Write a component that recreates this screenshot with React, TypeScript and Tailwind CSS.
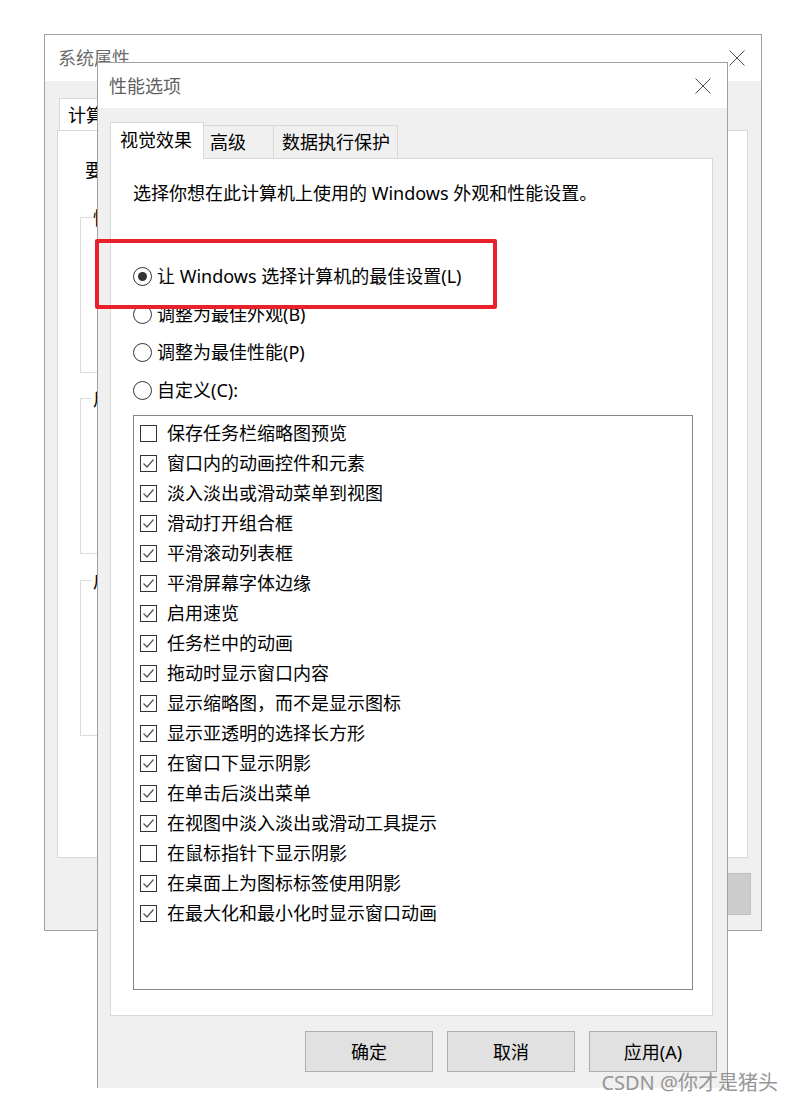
import React from 'react';

const options: [string, boolean][] = [
  ['保存任务栏缩略图预览', false],
  ['窗口内的动画控件和元素', true],
  ['淡入淡出或滑动菜单到视图', true],
  ['滑动打开组合框', true],
  ['平滑滚动列表框', true],
  ['平滑屏幕字体边缘', true],
  ['启用速览', true],
  ['任务栏中的动画', true],
  ['拖动时显示窗口内容', true],
  ['显示缩略图，而不是显示图标', true],
  ['显示亚透明的选择长方形', true],
  ['在窗口下显示阴影', true],
  ['在单击后淡出菜单', true],
  ['在视图中淡入淡出或滑动工具提示', true],
  ['在鼠标指针下显示阴影', false],
  ['在桌面上为图标标签使用阴影', true],
  ['在最大化和最小化时显示窗口动画', true],
];

const radios = ['让 Windows 选择计算机的最佳设置(L)', '调整为最佳外观(B)', '调整为最佳性能(P)', '自定义(C):'];

const CloseIcon = () => (
  <svg width="16" height="16" viewBox="0 0 16 16">
    <path d="M0.5 0.5L15.5 15.5M15.5 0.5L0.5 15.5" stroke="#4a4a4a" strokeWidth="1" fill="none" />
  </svg>
);

const Checkbox: React.FC<{ checked: boolean }> = ({ checked }) => (
  <div className="w-[17px] h-[17px] border border-[#333] bg-white flex items-center justify-center shrink-0">
    {checked && (
      <svg width="15" height="15" viewBox="0 0 15 15">
        <polyline points="2.5,7.5 6,11 12.5,3.5" stroke="#555" strokeWidth="1.3" fill="none" />
      </svg>
    )}
  </div>
);

const Radio: React.FC<{ selected: boolean }> = ({ selected }) => (
  <div className="w-[19px] h-[19px] rounded-full border border-[#333] bg-white flex items-center justify-center shrink-0">
    {selected && <div className="w-[9px] h-[9px] rounded-full bg-[#333]" />}
  </div>
);

// group boxes of the window behind; only their left edge shows
const GroupBox: React.FC<{ label: string; mt: string }> = ({ label, mt }) => (
  <div className={`relative ${mt} ml-[22px] w-[620px] h-[156px] border border-[#dcdcdc]`}>
    <span className="absolute left-[11px] -top-[12px] bg-white px-[1px] text-[18px] leading-[24px] text-black">{label}</span>
  </div>
);

export default function App() {
  return (
    <div className="relative w-[793px] h-[1103px] bg-white overflow-hidden font-[Noto_Sans,Noto_Sans_CJK_SC,sans-serif] text-[18px] text-black">
      {/* 系统属性 (background window) */}
      <div className="absolute left-[44px] top-[34px] w-[718px] h-[897px] border border-[#a0a0a0] bg-[#f0f0f0] flex flex-col">
        <div className="h-[46px] bg-white flex items-center justify-between pl-[13px] pr-[16px]">
          <span className="text-[#6b6b6b] leading-none">系统属性</span>
          <CloseIcon />
        </div>
        <div className="flex flex-col pt-[17px] pl-[12px] pr-[13px]">
          <div className="flex">
            <div className="ml-[2px] h-[33px] w-[96px] -mb-px bg-white border border-b-0 border-[#d9d9d9] flex items-center pl-[8px] leading-none">
              计算机名
            </div>
          </div>
          <div className="h-[728px] bg-white border border-[#d9d9d9] flex flex-col">
            <div className="pt-[27px] pl-[27px] h-[51px] flex items-end leading-[24px]">要进行大多数更改</div>
            <GroupBox label="性能" mt="mt-[35px]" />
            <GroupBox label="用户" mt="mt-[25px]" />
            <GroupBox label="启动" mt="mt-[26px]" />
          </div>
          <div className="flex justify-end mt-[15px] -mr-[3px]">
            <div className="w-[110px] h-[42px] bg-[#cccccc] border border-[#bfbfbf]" />
          </div>
        </div>
      </div>

      {/* 性能选项 (foreground window) */}
      <div className="absolute left-[97px] top-[62px] w-[631px] h-[1026px] border border-b-0 border-[#a0a0a0] bg-[#f0f0f0] flex flex-col">
        <div className="h-[45px] bg-white flex items-center justify-between pl-[11px] pr-[16px]">
          <span className="text-[#5f5f5f] leading-none">性能选项</span>
          <CloseIcon />
        </div>
        <div className="flex flex-col pt-[14px] pl-[12px] pr-[14px]">
          {/* tabs */}
          <div className="flex items-end h-[36px]">
            <div className="relative z-10 h-[37px] w-[94px] -mb-px bg-white border border-b-0 border-[#d9d9d9] flex items-center pl-[9px] pb-[3px] leading-none">
              视觉效果
            </div>
            <div className="h-[33px] w-[70px] bg-[#f0f0f0] border-t border-r border-[#d9d9d9] flex items-center pl-[6px] leading-none">
              高级
            </div>
            <div className="h-[33px] w-[124px] bg-[#f0f0f0] border-t border-r border-[#d9d9d9] flex items-center pl-[8px] leading-none">
              数据执行保护
            </div>
          </div>

          {/* tab panel */}
          <div className="w-[603px] h-[858px] bg-white border border-[#d9d9d9] flex flex-col pt-[22px] pl-[22px]">
            <div className="h-[24px] flex items-center leading-none">选择你想在此计算机上使用的 Windows 外观和性能设置。</div>

            <div className="mt-[52px] flex flex-col">
              {radios.map((label, i) => (
                <div key={label} className="h-[38px] flex items-center gap-[5px] leading-none">
                  <Radio selected={i === 0} />
                  <span>{label}</span>
                </div>
              ))}
            </div>

            <div className="mt-[6px] w-[560px] h-[575px] border border-[#828790] bg-white flex flex-col pt-[2px] pl-[6px]">
              {options.map(([label, checked]) => (
                <div key={label} className="h-[30px] flex items-center gap-[10px] leading-none">
                  <Checkbox checked={checked} />
                  <span>{label}</span>
                </div>
              ))}
            </div>
          </div>

          {/* buttons */}
          <div className="mt-[15px] flex justify-end gap-[14px] -mr-[4px]">
            {['确定', '取消', '应用(A)'].map((b) => (
              <div key={b} className="w-[128px] h-[41px] bg-[#e1e1e1] border border-[#adadad] flex items-center justify-center leading-none">
                {b}
              </div>
            ))}
          </div>
        </div>
      </div>

      {/* red highlight */}
      <div className="absolute left-[95px] top-[239px] w-[402px] h-[70px] border-[4px] border-[#e8212b] rounded-[2px]" />

      {/* watermark */}
      <div className="absolute right-[15px] top-[1070px] text-[20px] leading-[26px] text-[#8c8c8c] opacity-90">CSDN @你才是猪头</div>
    </div>
  );
}
